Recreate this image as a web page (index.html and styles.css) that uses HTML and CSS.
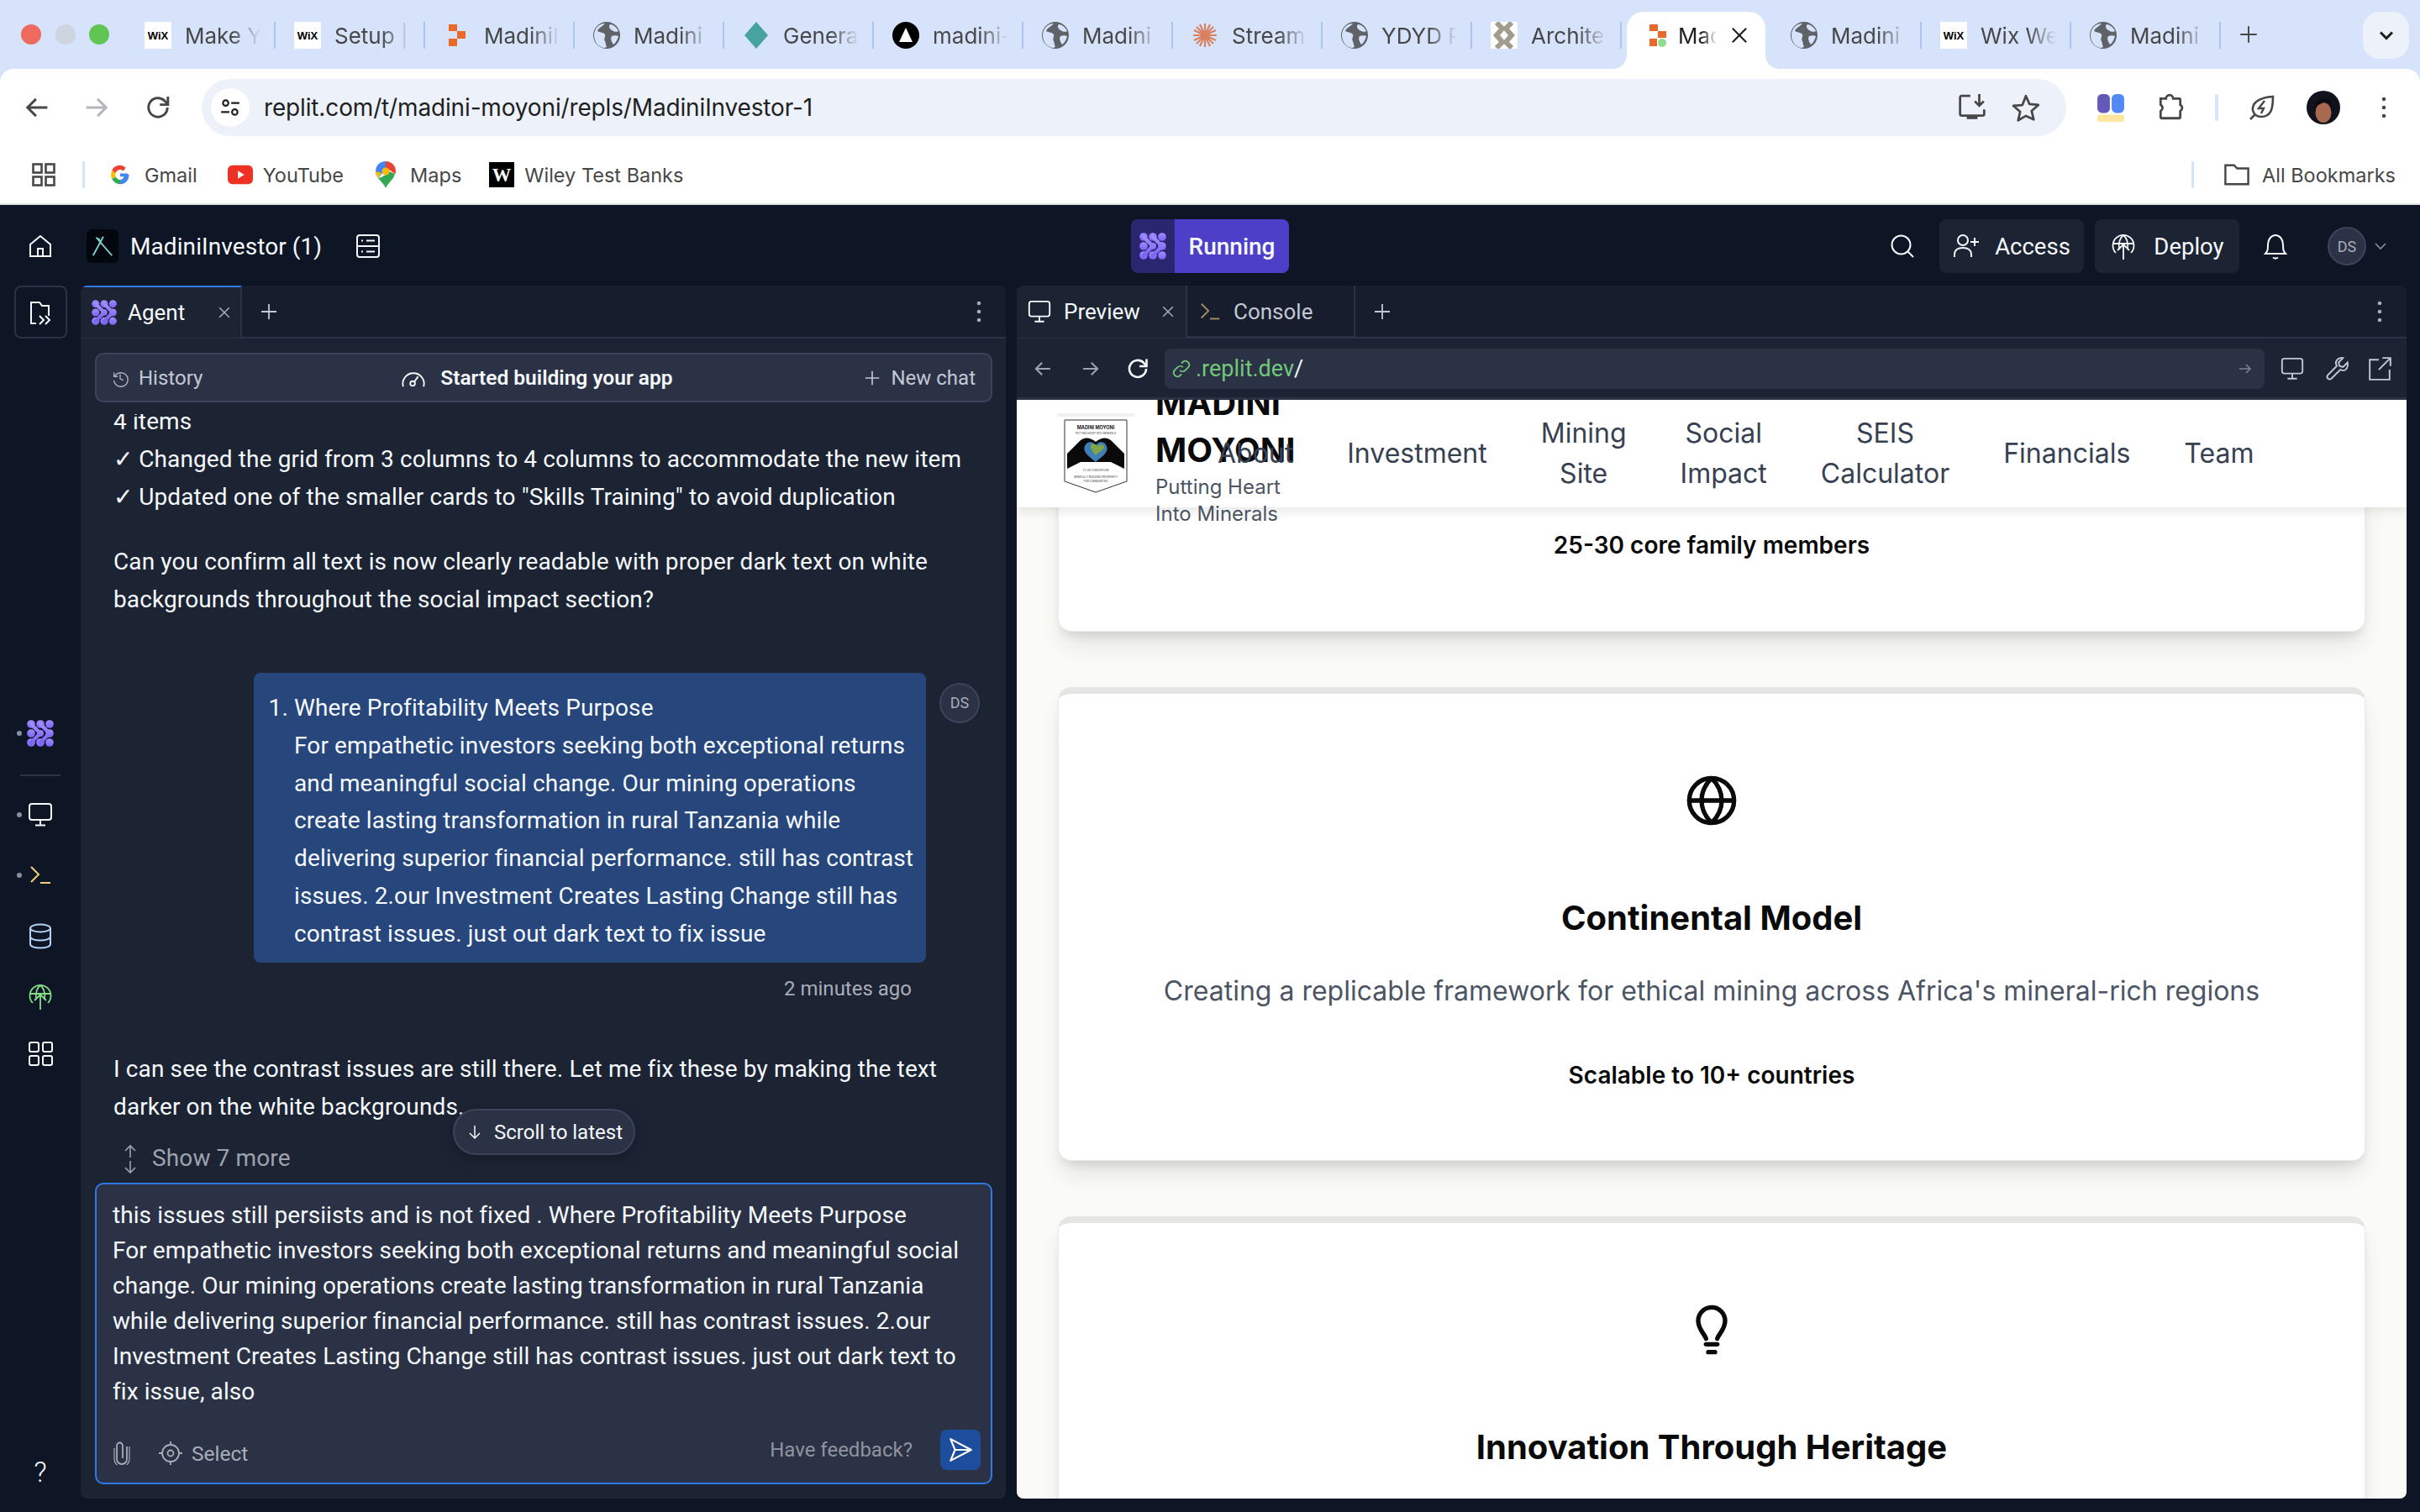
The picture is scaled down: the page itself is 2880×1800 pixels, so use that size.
FILE: index.html
```html
<!DOCTYPE html>
<html lang="en">
<head>
<meta charset="utf-8">
<title>MadiniInvestor</title>
<link rel="stylesheet" href="styles.css">
</head>
<body>
<svg class="defs" width="0" height="0" aria-hidden="true">
  <defs>
    <linearGradient id="ag" x1="0" y1="0" x2="0" y2="1"><stop offset="0" stop-color="#a08cff"/><stop offset="1" stop-color="#7a63f5"/></linearGradient>
    <symbol id="agent" viewBox="0 0 32 32"><g fill="url(#ag)"><circle cx="5" cy="5" r="4.800"/><circle cx="16" cy="5" r="4.800"/><circle cx="27" cy="5" r="4.800"/><circle cx="5" cy="16" r="4.800"/><circle cx="16" cy="16" r="4"/><circle cx="27" cy="16" r="4.800"/><circle cx="5" cy="27" r="4.800"/><circle cx="16" cy="27" r="4.800"/><circle cx="27" cy="27" r="4.800"/></g><g fill="none" stroke="url(#ag)" stroke-width="4.500" stroke-linecap="round" stroke-linejoin="round"><path d="M5 5l11 11L5 27"/><path d="M16 5l11 11-11 11"/></g></symbol>
    <symbol id="globe" viewBox="0 0 32 32"><circle cx="16" cy="16" r="16" fill="#5f6368"/><path d="M14 2c-3 4-8 5-9 9 3 2 7 1 9 4 1 3-2 5 0 8 1 3 1 5 2 7l-3 1C6 30 1 24 1 16S7 2 14 2zM20 3c3 0 8 3 10 8-3 2-6 0-8-1-3-2-4-5-2-7zM22 17c3-1 6-1 8 0-1 4-3 8-6 10-2-3-4-7-2-10z" fill="#d6e3fb"/></symbol>
    <symbol id="wix" viewBox="0 0 32 32"><rect width="32" height="32" fill="#fff"/><text x="16" y="21" text-anchor="middle" class="wixt">WiX</text></symbol>
    <symbol id="rep" viewBox="0 0 32 32"><path d="M6 3h10v8H6zM16 11h10v9H16zM6 20h10v9H6z" fill="#e8692a"/></symbol>
    <symbol id="repg" viewBox="0 0 32 32"><path d="M6 3h10v8H6zM16 11h10v8H16zM6 20h9v9H6z" fill="#e8692a"/><ellipse cx="21" cy="25" rx="5" ry="5" fill="#8fdc8f"/></symbol>
    <symbol id="back" viewBox="0 0 32 32"><path d="M27 16H6M15 7l-9 9 9 9" fill="none" stroke="currentColor" stroke-width="2.600"/></symbol>
    <symbol id="fwd" viewBox="0 0 32 32"><path d="M5 16h21M17 7l9 9-9 9" fill="none" stroke="currentColor" stroke-width="2.600"/></symbol>
    <symbol id="reload" viewBox="0 0 32 32"><path d="M26 16a10 10 0 1 1-3-7.200L26 12" fill="none" stroke="currentColor" stroke-width="2.600"/><path d="M26.500 4.500v8.500h-8.500" fill="none" stroke="currentColor" stroke-width="2.600"/></symbol>
    <symbol id="plus" viewBox="0 0 24 24"><path d="M12 3v18M3 12h18" stroke="currentColor" stroke-width="1.800" fill="none"/></symbol>
    <symbol id="x" viewBox="0 0 24 24"><path d="M5 5l14 14M19 5L5 19" stroke="currentColor" stroke-width="1.800" fill="none"/></symbol>
    <symbol id="dots" viewBox="0 0 8 32"><circle cx="4" cy="6" r="2.300" fill="currentColor"/><circle cx="4" cy="16" r="2.300" fill="currentColor"/><circle cx="4" cy="26" r="2.300" fill="currentColor"/></symbol>
    <symbol id="monitor" viewBox="0 0 32 32"><rect x="3" y="3" width="26" height="19" rx="3" fill="none" stroke="currentColor" stroke-width="2"/><path d="M16 22v6M10 28.500h12" stroke="currentColor" stroke-width="2" fill="none"/></symbol>
    <symbol id="prompt" viewBox="0 0 32 32"><path d="M5 6l9 9-9 9" fill="none" stroke="#f0cf7e" stroke-width="2"/><path d="M16 25h12" stroke="#f0cf7e" stroke-width="2"/></symbol>
    <symbol id="deploy" viewBox="0 0 32 32"><g fill="none" stroke="currentColor" stroke-width="1.800"><path d="M7 24a12.500 12.500 0 1 1 18 0"/><path d="M11 20C10 12 12 6 16 3 20 6 22 12 21 20M3.500 13h25"/><path d="M16 32V14M9 21l7-7 7 7"/></g></symbol>
    <symbol id="grid" viewBox="0 0 32 32"><g fill="none" stroke="currentColor" stroke-width="2"><rect x="3" y="3" width="11" height="11" rx="2"/><rect x="19" y="3" width="11" height="11" rx="2"/><rect x="3" y="19" width="11" height="11" rx="2"/><rect x="19" y="19" width="11" height="11" rx="2"/></g></symbol>
  </defs>
</svg>

<div class="chrome">
  <div class="tabstrip">
    <div class="lights"><i class="l-red"></i><i class="l-gray"></i><i class="l-green"></i></div>
    <div class="tab"><svg class="fav"><use href="#wix"/></svg><span class="tlabel">Make Your</span></div>
    <div class="tab"><svg class="fav"><use href="#wix"/></svg><span class="tlabel">Setup | Wix</span></div>
    <div class="tab"><svg class="fav"><use href="#rep"/></svg><span class="tlabel">MadiniInvestor</span></div>
    <div class="tab"><svg class="fav"><use href="#globe"/></svg><span class="tlabel">Madini Moyoni</span></div>
    <div class="tab"><svg class="fav" viewBox="0 0 32 32"><path d="M16 0l14 16-14 16L2 16z" fill="#48a3a0"/></svg><span class="tlabel">General chat</span></div>
    <div class="tab"><svg class="fav" viewBox="0 0 32 32"><circle cx="16" cy="16" r="16" fill="#000"/><path d="M16 7l8 17H8z" fill="#fff"/></svg><span class="tlabel">madini-moyoni</span></div>
    <div class="tab"><svg class="fav"><use href="#globe"/></svg><span class="tlabel">Madini Moyoni</span></div>
    <div class="tab"><svg class="fav" viewBox="0 0 32 32"><g stroke="#d9805f" stroke-width="2.200"><path d="M16 2v28M2 16h28M6 6l20 20M26 6L6 26M10 3l12 26M22 3L10 29M3 10l26 12M29 10L3 22"/></g></svg><span class="tlabel">Streamlit app</span></div>
    <div class="tab"><svg class="fav"><use href="#globe"/></svg><span class="tlabel">YDYD Portal</span></div>
    <div class="tab"><svg class="fav" viewBox="0 0 32 32"><rect width="32" height="32" fill="#fff"/><path d="M7 1l7 7-7 8 7 8-7 7M25 1l-7 7 7 8-7 8 7 7" fill="none" stroke="#a09d8c" stroke-width="6"/></svg><span class="tlabel">Architecture</span></div>
    <div class="tab tab-active"><svg class="fav fav-sm"><use href="#repg"/></svg><span class="tlabel tlabel-active">Madini</span><svg class="tab-x"><use href="#x"/></svg></div>
    <div class="tab tab-after"><svg class="fav"><use href="#globe"/></svg><span class="tlabel">Madini Moyoni</span></div>
    <div class="tab"><svg class="fav"><use href="#wix"/></svg><span class="tlabel">Wix Website</span></div>
    <div class="tab"><svg class="fav"><use href="#globe"/></svg><span class="tlabel">Madini Moyoni</span></div>
    <svg class="newtab"><use href="#plus"/></svg>
    <div class="tabsearch"><svg viewBox="0 0 24 24"><path d="M6 9l6 6 6-6" fill="none" stroke="#1f1f1f" stroke-width="2.600"/></svg></div>
  </div>

  <div class="toolbar">
    <svg class="tb tb-back"><use href="#back"/></svg>
    <svg class="tb tb-fwd"><use href="#fwd"/></svg>
    <svg class="tb tb-reload"><use href="#reload"/></svg>
    <div class="omni">
      <span class="tune"><svg viewBox="0 0 24 24"><g fill="none" stroke="#1f1f1f" stroke-width="2"><circle cx="7" cy="7" r="3"/><path d="M13 7h9M2 17h9"/><circle cx="17" cy="17" r="3"/></g></svg></span>
      <span class="omni-url">replit.com/t/madini-moyoni/repls/MadiniInvestor-1</span>
      <svg class="omni-ic omni-install" viewBox="0 0 32 32"><g fill="none" stroke="#474747" stroke-width="2.600"><path d="M14 3H4a1.500 1.500 0 0 0-1.500 1.500v19A1.500 1.500 0 0 0 4 25h24a1.500 1.500 0 0 0 1.500-1.500V18"/><path d="M24 1v13M19 9l5 5 5-5"/></g><rect x="10" y="25" width="12" height="4" fill="#474747"/></svg>
      <svg class="omni-ic omni-star" viewBox="0 0 32 32"><path d="M16 3l4 9.200 10 .9-7.600 6.600 2.300 9.800L16 25.300 7.300 30.500l2.300-9.800L2 14.100l10-.9z" fill="none" stroke="#474747" stroke-width="2.600" stroke-linejoin="round"/></svg>
    </div>
    <svg class="tb-ext" viewBox="0 0 32 32"><rect x="1" y="1" width="14" height="21" rx="5" fill="#6458b8"/><rect x="17" y="1" width="14" height="21" rx="5" fill="#5289f5"/><rect x="1" y="24" width="30" height="8" rx="3" fill="#fbe69b"/></svg>
    <svg class="tb-puzzle" viewBox="0 0 32 32"><path d="M5 6h6a4 4 0 0 1 8 0h7a1 1 0 0 1 1 1v6a4 4 0 0 1 0 7v7a1 1 0 0 1-1 1H6a1 1 0 0 1-1-1v-7a4 4 0 0 0 0-7z" fill="none" stroke="#474747" stroke-width="2.600"/></svg>
    <i class="tb-div"></i>
    <svg class="tb-leaf" viewBox="0 0 32 32"><path d="M29 3c0 14-2 24-14 24-5 0-9-3-10-8C4 10 13 4 29 3zM2 30l6-6" fill="none" stroke="#474747" stroke-width="2.600"/><path d="M19 8l-7 9h6l-3 6" fill="none" stroke="#474747" stroke-width="2.400"/></svg>
    <svg class="tb-avatar" viewBox="0 0 40 40"><circle cx="20" cy="20" r="20" fill="#10131b"/><ellipse cx="20" cy="26" rx="9.500" ry="12" fill="#a8694e"/><path d="M9 20c1-7 6-11 12-11 6 0 10 5 10 12l-4-6-7-1-6 3z" fill="#0a0c12"/></svg>
    <svg class="tb-dots"><use href="#dots"/></svg>
  </div>

  <div class="bookmarks">
    <svg class="bm-apps" viewBox="0 0 28 28"><g fill="none" stroke="#474747" stroke-width="2.600"><rect x="1.500" y="1.500" width="10" height="10"/><rect x="16.500" y="1.500" width="10" height="10"/><rect x="1.500" y="16.500" width="10" height="10"/><rect x="16.500" y="16.500" width="10" height="10"/></g></svg>
    <i class="bm-div"></i>
    <span class="bm bm-first"><svg class="bm-ic" viewBox="0 0 32 32"><path d="M27 14H16v5h6c-1 3-3 5-6 5V31c8 0 14-6 14-15z" fill="#4285f4"/><path d="M16 24c-3 0-6-2-7-5l-6 4c3 5 8 8 13 8z" fill="#34a853"/><path d="M9 19c-1-2-1-4 0-6L3 9c-2 4-2 10 0 14z" fill="#fbbc05"/><path d="M9 13c1-3 4-5 7-5 2 0 4 1 5 2l4-5c-2-2-6-4-9-4C10 1 5 4 3 9z" fill="#ea4335"/></svg>Gmail</span>
    <span class="bm bm-yt"><svg class="bm-ic" viewBox="0 0 32 32"><rect y="4" width="32" height="24" rx="6" fill="#ee3123"/><path d="M13 11l8 5-8 5z" fill="#fff"/></svg>YouTube</span>
    <span class="bm bm-maps"><svg class="bm-ic" viewBox="0 0 24 32"><path d="M12 0C5 0 0 5 0 12c0 3 1 5 3 8l9-10V0z" fill="#4285f4"/><path d="M12 0c7 0 12 5 12 12 0 1 0 2-1 3l-7-5-4 0z" fill="#ea4335"/><path d="M3 20c3 4 7 7 9 12 2-5 6-8 9-12l2-5-7-3-4 4-5 3z" fill="#34a853"/><path d="M3 20C1 17 0 15 0 12l7 2z" fill="#fbbc05"/><circle cx="12" cy="12" r="4.500" fill="#fbbc05"/></svg>Maps</span>
    <span class="bm bm-w"><svg class="bm-ic" viewBox="0 0 32 32"><rect width="32" height="32" fill="#000"/><text x="16" y="24" text-anchor="middle" class="wt">W</text></svg>Wiley Test Banks</span>
    <i class="bm-div bm-div2"></i>
    <span class="bm bm-all"><svg class="bm-ic" viewBox="0 0 32 32"><path d="M1.500 4h11l4 4h14v20H1.500z" fill="none" stroke="#474747" stroke-width="2.600"/></svg>All Bookmarks</span>
  </div>
</div>

<div class="ide">
  <header class="topbar">
    <div class="top-left">
      <svg class="ic-home" viewBox="0 0 28 28"><path d="M2 12L14 2l12 10v14H2zM11 26v-9h6v9" fill="none" stroke="#f5f9fc" stroke-width="2"/></svg>
      <span class="repl-logo"><svg viewBox="0 0 32 32"><path d="M4 28L17 4M8 5l20 23M14 13l-3-7" fill="none" stroke="#7fd0cf" stroke-width="2"/></svg></span>
      <span class="repl-name">MadiniInvestor (1)</span>
      <svg class="ic-db" viewBox="0 0 28 28"><g fill="none" stroke="#f5f9fc" stroke-width="2"><rect x="1" y="1" width="26" height="26" rx="3"/><path d="M1 14h26M6 7.500h2M12 7.500h10M6 20.500h2M12 20.500h10"/></g></svg>
    </div>
    <div class="run"><span class="run-ic"><svg><use href="#agent"/></svg></span><span class="run-label">Running</span></div>
    <div class="top-right">
      <svg class="ic-search" viewBox="0 0 28 28"><circle cx="12.500" cy="12.500" r="11" fill="none" stroke="#f5f9fc" stroke-width="2"/><path d="M20 20l7 7" stroke="#f5f9fc" stroke-width="2"/></svg>
      <button class="tbtn"><svg viewBox="0 0 32 32"><g fill="none" stroke="#f5f9fc" stroke-width="2"><circle cx="12" cy="9" r="6"/><path d="M2 29v-3c0-5 4-8 10-8s10 3 10 8v3M26 6v10M21 11h10"/></g></svg>Access</button>
      <button class="tbtn tbtn2"><svg class="ic-dep"><use href="#deploy"/></svg>Deploy</button>
      <svg class="ic-bell" viewBox="0 0 28 32"><path d="M2 25c3-3 3-6 3-11C5 8 9 3 14 3s9 5 9 11c0 5 0 8 3 11zM11 29.500c2 1.500 4 1.500 6 0" fill="none" stroke="#f5f9fc" stroke-width="2"/></svg>
      <span class="user">DS</span>
      <svg class="ic-chev" viewBox="0 0 16 16"><path d="M2 5l6 6 6-6" fill="none" stroke="#8a8f9c" stroke-width="1.600"/></svg>
    </div>
  </header>

  <div class="main">
    <nav class="rail">
      <span class="rail-files"><svg viewBox="0 0 28 32"><path d="M9 29H3V4h10l3 4h8v12" fill="none" stroke="#f5f9fc" stroke-width="2"/><path d="M13 20l5 5-5 5M20 20l5 5-5 5" fill="none" stroke="#f5f9fc" stroke-width="2"/></svg></span>
      <div class="rail-item rail-first"><i class="rail-dot"></i><svg><use href="#agent"/></svg></div>
      <i class="rail-sep"></i>
      <div class="rail-item rail-white"><i class="rail-dot"></i><svg><use href="#monitor"/></svg></div>
      <div class="rail-item"><i class="rail-dot"></i><svg><use href="#prompt"/></svg></div>
      <div class="rail-item"><svg viewBox="0 0 32 32"><g fill="none" stroke="#b5d3f5" stroke-width="2"><ellipse cx="16" cy="7" rx="12" ry="4.500"/><path d="M4 7v19c0 3 6 4.500 12 4.500S28 29 28 26V7M4 17c0 3 6 4.500 12 4.500S28 20 28 17"/></g></svg></div>
      <div class="rail-item rail-green"><svg><use href="#deploy"/></svg></div>
      <div class="rail-item rail-grid rail-white"><svg><use href="#grid"/></svg></div>
      <span class="rail-help">?</span>
    </nav>

    <section class="panel agent">
      <div class="tabbar">
        <div class="ptab ptab-agent"><svg class="ptab-ic"><use href="#agent"/></svg><span class="ptab-name">Agent</span><svg class="ptab-x"><use href="#x"/></svg></div>
        <svg class="pplus"><use href="#plus"/></svg>
        <svg class="pdots"><use href="#dots"/></svg>
      </div>
      <div class="histbar">
        <span class="h-item"><svg viewBox="0 0 24 24"><path d="M4 5v5h5M5 10a9 9 0 1 1-1 5M12 7v6l4 2" fill="none" stroke="#a9adb8" stroke-width="1.600"/></svg>History</span>
        <span class="h-status"><svg viewBox="0 0 32 24"><path d="M3 23A13.500 13.500 0 1 1 29 23" fill="none" stroke="#f5f9fc" stroke-width="2"/><circle cx="15" cy="19" r="3" fill="none" stroke="#f5f9fc" stroke-width="2"/><path d="M17 17l5-7" stroke="#f5f9fc" stroke-width="2"/></svg>Started building your app</span>
        <span class="h-item h-new"><svg><use href="#plus"/></svg>New chat</span>
      </div>
      <div class="chat">
        <div class="chat-in">
          <p class="msg">4 items<br>✓ Changed the grid from 3 columns to 4 columns to accommodate the new item<br>✓ Updated one of the smaller cards to "Skills Training" to avoid duplication</p>
          <p class="msg msg-q">Can you confirm all text is now clearly readable with proper dark text on white<br>backgrounds throughout the social impact section?</p>
          <div class="urow">
            <div class="bubble"><ol><li>Where Profitability Meets Purpose<br>For empathetic investors seeking both exceptional returns<br>and meaningful social change. Our mining operations<br>create lasting transformation in rural Tanzania while<br>delivering superior financial performance. still has contrast<br>issues. 2.our Investment Creates Lasting Change still has<br>contrast issues. just out dark text to fix issue</li></ol></div>
            <span class="user user-sm">DS</span>
          </div>
          <div class="ago">2 minutes ago</div>
          <p class="msg msg-a">I can see the contrast issues are still there. Let me fix these by making the text<br>darker on the white backgrounds.</p>
          <div class="more"><svg viewBox="0 0 20 36"><path d="M10 2v14M4 8l6-6 6 6M10 20v14M4 28l6 6 6-6" fill="none" stroke="#9da2ad" stroke-width="1.600"/></svg>Show 7 more</div>
        </div>
        <div class="latest"><svg viewBox="0 0 20 20"><path d="M10 2v15M4 11l6 6 6-6" fill="none" stroke="#f5f9fc" stroke-width="1.500"/></svg>Scroll to latest</div>
      </div>
      <div class="composer">
        <p class="composer-text">this issues still persiists and is not fixed . Where Profitability Meets Purpose<br>For empathetic investors seeking both exceptional returns and meaningful social<br>change. Our mining operations create lasting transformation in rural Tanzania<br>while delivering superior financial performance. still has contrast issues. 2.our<br>Investment Creates Lasting Change still has contrast issues. just out dark text to<br>fix issue, also</p>
        <div class="composer-foot">
          <svg class="c-clip" viewBox="0 0 22 28"><path d="M17 6v15a6 6 0 0 1-12 0V5a3.500 3.500 0 0 1 7 0v15" fill="none" stroke="#a9adb8" stroke-width="1.800"/><path d="M2 8v13a9 9 0 0 0 18 0V6" fill="none" stroke="#a9adb8" stroke-width="1.200"/></svg>
          <span class="c-select"><svg viewBox="0 0 28 28"><g fill="none" stroke="#a9adb8" stroke-width="1.800"><circle cx="14" cy="14" r="10"/><circle cx="14" cy="14" r="3.500"/><path d="M14 0v4M14 24v4M0 14h4M24 14h4"/></g></svg>Select</span>
          <span class="c-fb">Have feedback?</span>
          <span class="c-send"><svg viewBox="0 0 28 28"><path d="M3 2l23 12L3 26l5-12zM8 14h18" fill="none" stroke="#fff" stroke-width="2" stroke-linejoin="round"/></svg></span>
        </div>
      </div>
    </section>

    <section class="panel preview">
      <div class="tabbar">
        <div class="ptab ptab-prev"><svg class="ptab-ic2"><use href="#monitor"/></svg><span class="ptab-name">Preview</span><svg class="ptab-x"><use href="#x"/></svg></div>
        <div class="ptab ptab-con"><svg class="ptab-ic2 dim"><use href="#prompt"/></svg><span class="ptab-name dim-t">Console</span></div>
        <svg class="pplus"><use href="#plus"/></svg>
        <svg class="pdots"><use href="#dots"/></svg>
      </div>
      <div class="urlbar">
        <svg class="u-nav u-back"><use href="#back"/></svg>
        <svg class="u-nav"><use href="#fwd"/></svg>
        <svg class="u-reload"><use href="#reload"/></svg>
        <div class="u-field">
          <svg class="u-link" viewBox="0 0 24 24"><g fill="none" stroke="#72c77a" stroke-width="2"><path d="M10 14a5 5 0 0 0 7 0l4-4a5 5 0 0 0-7-7l-2 2"/><path d="M14 10a5 5 0 0 0-7 0l-4 4a5 5 0 0 0 7 7l2-2"/></g></svg>
          <span class="u-host">.replit.dev</span><span class="u-path">/</span>
          <svg class="u-go" viewBox="0 0 20 20"><path d="M3 10h13M11 5l5 5-5 5" fill="none" stroke="#7c8290" stroke-width="1.500"/></svg>
        </div>
        <svg class="u-act u-act1"><use href="#monitor"/></svg>
        <svg class="u-act u-act2" viewBox="0 0 28 28"><path d="M25 7l-5 5-4-1-1-4 5-5c-4-1-8 2-8 6l1 3L3 21c-2 3 1 6 4 4l10-10 3 1c4 0 6-5 5-9z" fill="none" stroke="#c2c8d4" stroke-width="1.800"/></svg>
        <svg class="u-act u-act3" viewBox="0 0 28 28"><path d="M13 4H3v22h22V15M17 2h9v9M26 2L13 15" fill="none" stroke="#c2c8d4" stroke-width="1.800"/></svg>
      </div>
      <div class="view">
        <div class="site">
          <article class="card card-first"><p class="metric">25-30 core family members</p></article>
          <article class="card">
            <svg class="card-ic" viewBox="0 0 24 24"><g fill="none" stroke="#0a0a0a" stroke-width="2"><circle cx="12" cy="12" r="10"/><path d="M2 12h20M12 2c-6 6-6 14 0 20M12 2c6 6 6 14 0 20"/></g></svg>
            <h3>Continental Model</h3>
            <p class="desc">Creating a replicable framework for ethical mining across Africa's mineral-rich regions</p>
            <p class="metric">Scalable to 10+ countries</p>
          </article>
          <article class="card">
            <svg class="card-ic" viewBox="0 0 24 24"><g fill="none" stroke="#0a0a0a" stroke-width="2" stroke-linecap="round"><path d="M9.500 16c-.5-2-3.500-4-3.500-8a6 6 0 0 1 12 0c0 4-3 6-3.500 8"/><path d="M9.500 18.500h5"/><path d="M10.500 22h3"/></g></svg>
            <h3>Innovation Through Heritage</h3>
          </article>
        </div>
        <div class="sitehead">
          <svg class="sitelogo" viewBox="0 0 92 96">
            <rect width="92" height="4" fill="#f0f0f0"/>
            <path d="M9 8h74v73L46 94 9 81z" fill="#fff" stroke="#333" stroke-width="1"/>
            <text x="46" y="19" text-anchor="middle" class="lg1">MADINI MOYONI</text>
            <text x="46" y="25" text-anchor="middle" class="lg2">PUTTING HEART INTO MINERALS</text>
            <path d="M12 48l14-14c5-6 13-6 20 0 7-6 15-6 20 0l14 14v18L64 58H28L12 66z" fill="#0a0a0a"/>
            <path d="M46 58C36 50 28 44 35 36c4-3 8-2 11 2 3-4 7-5 11-2 7 8-1 14-11 22z" fill="#3f7fb5"/>
            <path d="M46 50c-5-6-8-10-5-13 3-2 5 0 7 2 3-2 7-2 8 0 1 4-5 6-10 11z" fill="#7fa548"/>
            <text x="46" y="69" text-anchor="middle" class="lg2">TZ-UK CONSORTIUM</text>
            <text x="46" y="77" text-anchor="middle" class="lg2">MINDFULLY BUILDING PROSPERITY</text>
            <text x="46" y="82" text-anchor="middle" class="lg2">FOR COMMUNITIES</text>
          </svg>
          <div class="brand">
            <div class="brand-name">MADINI MOYONI</div>
            <div class="brand-sub">Putting Heart Into Minerals</div>
          </div>
          <nav class="sitenav">
            <span>About</span><span>Investment</span><span>Mining<br>Site</span><span>Social<br>Impact</span><span>SEIS<br>Calculator</span><span>Financials</span><span>Team</span>
          </nav>
        </div>
      </div>
    </section>
  </div>
</div>
</body>
</html>
```
FILE: styles.css
```css
* { box-sizing: border-box; }
html, body { margin: 0; padding: 0; }
body { width: 2880px; height: 1800px; overflow: hidden; display: flex; flex-direction: column; font-family: "Inter", "Liberation Sans", sans-serif; background: #0e1525; }
.defs { position: absolute; }
svg { display: block; flex: none; }
p { margin: 0; }

.chrome { background: #d6e3fb; color: #474747; height: 244px; flex: none; }
.tabstrip { height: 82px; background: #d6e3fb; display: flex; align-items: flex-end; position: relative; }
.lights { width: 150px; height: 82px; display: flex; align-items: center; gap: 16.500px; padding-left: 25px; flex: none; }
.lights i { width: 24px; height: 24px; border-radius: 50%; }
.l-red { background: #ee6a5f; }
.l-gray { background: #ced5e1; }
.l-green { background: #61c554; }
.tab { width: 178px; height: 68px; flex: none; display: flex; align-items: center; gap: 16px; padding: 0 0 12px 22px; position: relative; color: #474747; font-size: 26px; }
.tab::after { content: ""; position: absolute; right: 0; top: 12px; width: 2px; height: 32px; background: #a9c4f0; }
.fav { width: 32px; height: 32px; }
.wixt { font: 700 13px "Liberation Sans", sans-serif; fill: #000; }
.tlabel { width: 90px; overflow: hidden; white-space: nowrap; -webkit-mask-image: linear-gradient(90deg, #000 62%, transparent 100%); mask-image: linear-gradient(90deg, #000 62%, transparent 100%); }
.tab-active { width: 165px; margin-left: 6px; background: #fff; border-radius: 20px 20px 0 0; padding-left: 21px; gap: 8px; color: #1f1f1f; }
.tab-active::after { display: none; }
.tab-active::before { content: ""; position: absolute; left: -16px; right: -16px; bottom: 0; height: 16px; background: radial-gradient(circle at 0 0, #d6e3fb 15.500px, #fff 16px) left / 16px 16px no-repeat, radial-gradient(circle at 100% 0, #d6e3fb 15.500px, #fff 16px) right / 16px 16px no-repeat; }
.fav-sm { width: 32px; }
.tlabel-active { width: 46px; }
.tab-x { width: 28px; height: 28px; color: #1f1f1f; margin-left: 5px; }
.tab-after { margin-left: 8px; }
.newtab { width: 26px; height: 26px; margin: 0 0 28px 20px; color: #474747; }
.tabsearch { position: absolute; left: 2812px; top: 14px; width: 55px; height: 56px; background: #edf2fa; border-radius: 20px; display: flex; align-items: center; justify-content: center; }
.tabsearch svg { width: 28px; height: 28px; }

.toolbar { height: 94px; background: #fff; display: flex; align-items: center; padding: 0 0 2px 26px; border-radius: 16px 16px 0 0; }
.tb { width: 36px; height: 36px; color: #474747; }
.tb-fwd { margin-left: 35px; color: #b2b5b9; }
.tb-reload { margin-left: 37px; }
.omni { margin-left: 34px; width: 2219px; height: 68px; background: #edf2fa; border-radius: 34px; display: flex; align-items: center; padding-left: 11px; }
.tune { width: 46px; height: 46px; background: #fff; border-radius: 50%; display: flex; align-items: center; justify-content: center; }
.tune svg { width: 26px; height: 26px; }
.omni-url { margin-left: 17px; font-size: 28px; color: #1f1f1f; letter-spacing: -.15px; }
.omni-ic { width: 34px; height: 34px; }
.omni-install { margin-left: auto; }
.omni-star { margin: 0 31px 0 30px; }
.tb-ext { width: 34px; height: 34px; margin-left: 36px; }
.tb-puzzle { width: 34px; height: 34px; margin-left: 37px; }
.tb-div { width: 4px; height: 32px; background: #d6e3fb; border-radius: 2px; margin-left: 36px; }
.tb-leaf { width: 32px; height: 32px; margin-left: 36px; }
.tb-avatar { width: 40px; height: 40px; margin-left: 37px; }
.tb-dots { width: 8px; height: 32px; margin-left: 48px; color: #474747; }

.bookmarks { height: 68px; background: #fff; border-bottom: 2px solid #e3e3e3; display: flex; align-items: center; padding: 0 0 2px 38px; font-size: 23.500px; color: #474747; }
.bm-apps { width: 28px; height: 28px; }
.bm-div { width: 3px; height: 32px; background: #d6e3fb; margin-left: 32px; }
.bm { display: flex; align-items: center; gap: 12px; white-space: nowrap; }
.bm-ic { width: 30px; height: 30px; }
.bm-first { margin-left: 30px; gap: 17px; }
.bm-first .bm-ic { width: 24px; height: 24px; }
.bm-yt { margin-left: 36px; }
.bm-maps { margin-left: 38px; gap: 17px; }
.bm-maps .bm-ic { width: 24px; height: 32px; }
.bm-w { margin-left: 33px; }
.wt { font: 700 24px "Liberation Serif", serif; fill: #fff; }
.bm-div2 { margin-left: auto; }
.bm-all { margin: 0 29px 0 36px; gap: 15px; }

.ide { flex: 1; display: flex; flex-direction: column; min-height: 0; color: #f5f9fc; font-family: "Roboto", "Liberation Sans", sans-serif; }
.topbar { height: 96px; flex: none; display: flex; align-items: center; padding-top: 2px; }
.top-left { width: 1346px; display: flex; align-items: center; padding-left: 34px; }
.ic-home { width: 28px; height: 28px; }
.repl-logo { width: 38px; height: 40px; margin-left: 41px; background: #03060d; border-radius: 6px; display: flex; align-items: center; justify-content: center; }
.repl-logo svg { width: 30px; height: 30px; }
.repl-name { margin-left: 14px; font-size: 28px; letter-spacing: .08px; }
.ic-db { width: 28px; height: 28px; margin-left: 41px; }
.run { display: flex; height: 64px; border-radius: 8px; overflow: hidden; width: 188px; }
.run-ic { width: 52px; background: #2b2670; display: flex; align-items: center; justify-content: center; }
.run-ic svg { width: 32px; height: 32px; }
.run-label { flex: 1; background: #4e3fc8; display: flex; align-items: center; justify-content: center; font-size: 28px; font-weight: 500; }
.top-right { flex: 1; display: flex; align-items: center; padding-left: 716px; }
.ic-search { width: 28px; height: 28px; }
.tbtn { width: 172px; height: 64px; background: #1c2333; border: 0; border-radius: 8px; color: #f5f9fc; font: inherit; font-size: 27.500px; display: flex; align-items: center; justify-content: center; gap: 18px; margin-left: 30px; }
.tbtn svg { width: 32px; height: 32px; }
.tbtn2 { margin-left: 13px; gap: 20px; }
.ic-dep { color: #f5f9fc; }
.ic-bell { width: 28px; height: 32px; margin-left: 29px; }
.user { width: 46px; height: 46px; border-radius: 50%; background: #2b3245; border: 2px solid #3c445c; color: #a9adb8; font-size: 18px; display: flex; align-items: center; justify-content: center; margin-left: 48px; flex: none; }
.ic-chev { width: 16px; height: 16px; margin-left: 9px; }

.main { flex: 1; display: flex; min-height: 0; padding-bottom: 16px; }
.rail { width: 96px; flex: none; display: flex; flex-direction: column; align-items: center; }
.rail-files { width: 63px; height: 63px; border: 2px solid #2b3245; border-radius: 8px; display: flex; align-items: center; justify-content: center; }
.rail-files svg { width: 28px; height: 32px; }
.rail-item { width: 96px; height: 72px; flex: none; display: flex; align-items: center; justify-content: center; position: relative; color: #f5f9fc; }
.rail-item svg { width: 32px; height: 32px; }
.rail-first { margin-top: 434px; }
.rail-dot { position: absolute; left: 20px; top: 33px; width: 6px; height: 6px; border-radius: 50%; background: #8a8f9c; }
.rail-sep { width: 48px; height: 2px; background: #2b3245; margin: 13px 0 10px; }
.rail-green { color: #86dc8a; }
.rail-grid { height: 64px; }
.rail-help { margin-top: auto; margin-bottom: 12px; font-size: 34px; color: #f5f9fc; line-height: 40px; font-weight: 300; }

.panel { background: #1c2333; border-radius: 8px; display: flex; flex-direction: column; overflow: hidden; flex: none; }
.agent { width: 1101px; }
.preview { width: 1654px; margin-left: 13px; }
.tabbar { height: 63px; flex: none; display: flex; align-items: center; background: #171d2d; position: relative; border-bottom: 2px solid #2b3245; }
.ptab { height: 63px; display: flex; align-items: center; background: #1c2333; font-size: 26px; flex: none; }
.ptab-agent { width: 192px; border-top: 3px solid #2f7ae5; border-right: 2px solid #2b3245; padding-left: 13px; }
.ptab-ic { width: 30px; height: 30px; }
.ptab-name { margin-left: 13px; }
.ptab-x { width: 20px; height: 20px; margin-left: 37px; color: #a9adb8; }
.pplus { width: 24px; height: 24px; margin-left: 20px; color: #c2c8d4; }
.pdots { width: 8px; height: 32px; position: absolute; right: 28px; top: 15px; color: #a9adb8; }
.ptab-prev { width: 201px; padding-left: 12px; }
.ptab-prev .ptab-x { margin-left: 23px; }
.ptab-prev .ptab-name { margin-left: 14px; }
.ptab-ic2 { width: 30px; height: 30px; color: #f5f9fc; }
.ptab-con { width: 202px; background: #171d2d; border: 0 solid #2b3245; border-width: 0 2px 2px 2px; padding: 2px 0 0 12px; }
.ptab-con .ptab-name { margin-left: 13px; }
.dim { opacity: .65; }
.dim-t { color: #c2c8d4; }

.histbar { height: 59px; margin: 17px 16px 0 17px; background: #2b3245; border: 2px solid #3c445c; border-radius: 10px; flex: none; display: flex; align-items: center; position: relative; font-size: 24px; color: #c2c8d4; padding: 0 18px 0 17px; justify-content: space-between; }
.h-item { display: flex; align-items: center; gap: 11px; }
.h-item svg { width: 22px; height: 22px; }
.h-status { display: flex; align-items: center; gap: 17px; font-weight: 600; color: #f5f9fc; font-size: 24.500px; margin-right: -9px; }
.h-status svg { width: 30px; height: 24px; }
.chat { flex: 1; min-height: 0; margin-top: 14px; overflow: hidden; position: relative; }
.chat-in { padding: 0 0 0 39px; margin-top: -13px; font-size: 28px; line-height: 44.800px; white-space: nowrap; letter-spacing: .12px; }
.msg-q { margin-top: 33px; }
.urow { display: flex; align-items: flex-start; margin: 64px 0 0 167px; }
.bubble { width: 800px; height: 345px; background: #26467c; border-radius: 8px; padding: 20px 0 0 17px; }
.bubble ol { margin: 0; padding: 0 0 0 31px; }
.user-sm { margin: 12px 0 0 16px; width: 48px; height: 48px; }
.ago { width: 950px; text-align: right; font-size: 24px; color: #a9adb8; margin-top: 9px; line-height: 44px; letter-spacing: 0; }
.msg-a { margin-top: 52px; }
.more { display: flex; align-items: center; gap: 16px; color: #9da2ad; padding-left: 10px; height: 50px; margin-top: 14px; }
.more svg { width: 20px; height: 36px; }
.latest { position: absolute; left: 443px; top: 827px; width: 217px; height: 55px; border: 2px solid #3c445c; background: #2b3245; border-radius: 28px; display: flex; align-items: center; gap: 13px; padding-left: 14px; font-size: 24px; box-shadow: 0 4px 16px rgba(0,0,0,.25); white-space: nowrap; }
.latest svg { width: 20px; height: 20px; }
.composer { height: 359px; margin: 0 16px 17px 17px; flex: none; background: #2b3245; border: 2px solid #2f7ae5; border-radius: 10px; padding: 16px 12px 0 19px; display: flex; flex-direction: column; }
.composer-text { font-size: 28px; line-height: 42px; white-space: nowrap; height: 252px; letter-spacing: .07px; }
.composer-foot { display: flex; align-items: center; margin-top: 24px; height: 48px; font-size: 24.500px; color: #a9adb8; }
.c-clip { width: 22px; height: 28px; margin-top: 8px; }
.c-select { display: flex; align-items: center; gap: 11px; margin: 8px 0 0 33px; }
.c-select svg { width: 28px; height: 28px; }
.c-fb { margin-left: auto; color: #8f949f; font-size: 24px; }
.c-send { width: 48px; height: 48px; background: #1d4e9e; border-radius: 8px; margin-left: 33px; display: flex; align-items: center; justify-content: center; }
.c-send svg { width: 30px; height: 30px; }

.urlbar { height: 73px; flex: none; display: flex; align-items: center; border-bottom: 3px solid #2b3245; padding: 2px 0 0 18px; color: #c2c8d4; }
.u-nav { width: 26px; height: 26px; color: #9da2ad; margin-left: 31px; }
.u-back { margin-left: 0; }
.u-reload { width: 32px; height: 32px; margin-left: 27px; color: #f5f9fc; }
.u-field { width: 1309px; height: 48px; margin-left: 16px; background: #2b3245; border-radius: 8px; display: flex; align-items: center; padding-left: 9px; font-size: 27px; }
.u-link { width: 22px; height: 22px; }
.u-host { color: #72c77a; margin-left: 6px; }
.u-path { color: #f5f9fc; }
.u-go { width: 20px; height: 20px; margin-left: auto; margin-right: 13px; }
.u-act { width: 30px; height: 30px; color: #c2c8d4; }
.u-act1 { margin-left: 18px; }
.u-act2 { margin-left: 24px; }
.u-act3 { margin-left: 20px; }

.view { flex: 1; min-height: 0; position: relative; overflow: hidden; background: #fafaf6; color: #0a0a0a; font-family: "Inter", "Liberation Sans", sans-serif; }
.site { display: flex; flex-direction: column; gap: 66px; padding: 0 49px; margin-top: -200px; }
.card { background: #fff; border: 1px solid #ececea; border-top: 8px solid #e5e5e3; border-radius: 16px; box-shadow: 0 20px 30px -6px rgba(0,0,0,.1), 0 8px 12px -4px rgba(0,0,0,.1); display: flex; flex-direction: column; align-items: center; padding: 95px 0 80px; height: 564px; flex: none; }
.card-first { height: 476px; padding-top: 343px; justify-content: flex-start; }
.card-ic { width: 64px; height: 64px; }
.card h3 { margin: 76px 0 0; font-size: 40px; line-height: 64px; font-weight: 700; color: #0a0a0a; }
.desc { margin-top: 29px; font-size: 32px; line-height: 52px; color: #4b5563; }
.metric { margin-top: 52px; font-size: 28px; line-height: 44px; font-weight: 600; color: #0a0a0a; }
.card-first .metric { margin-top: 0; }

.sitehead { position: absolute; left: 0; right: 0; top: 0; height: 128px; background: #fff; box-shadow: 0 4px 12px rgba(0,0,0,.1); display: flex; align-items: center; padding-left: 48px; }
.sitelogo { width: 92px; height: 96px; }
.brand { width: 150px; margin-left: 25px; flex: none; }
.brand-name { font-size: 40px; line-height: 56px; font-weight: 700; color: #0a0a0a; }
.brand-sub { font-size: 24px; line-height: 32px; color: #4b5563; }
.sitenav { display: flex; align-items: center; gap: 64px; margin-left: -76px; font-size: 32px; line-height: 48px; color: #374151; text-align: center; white-space: nowrap; }
.lg1 { font: 700 5.500px "Inter", sans-serif; fill: #222; }
.lg2 { font: 3px "Inter", sans-serif; fill: #333; }
```
